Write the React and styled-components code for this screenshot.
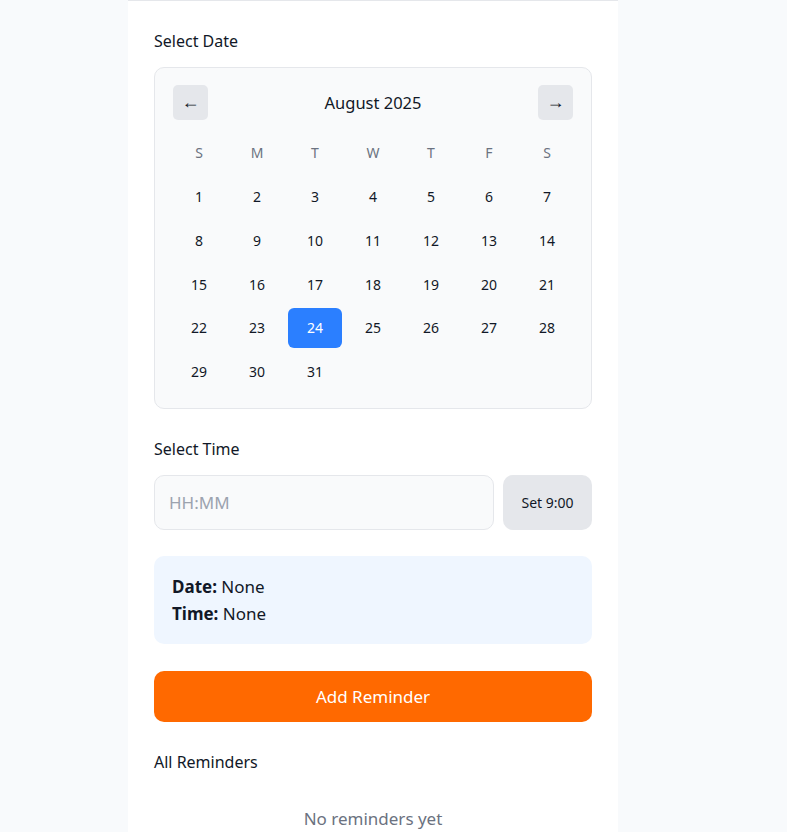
import React from 'react'
import styled, { createGlobalStyle } from 'styled-components'

const GlobalStyle = createGlobalStyle`
  html, body {
    margin: 0;
    padding: 0;
    background: #f8fafc;
    font-family: 'Noto Sans', 'Open Sans', sans-serif;
    color: #111827;
  }
  * { box-sizing: border-box; }
`

const Page = styled.div`
  display: flex;
  justify-content: flex-start;
  padding-left: 128px;
  min-height: 832px;
`

const Column = styled.main`
  width: 490px;
  background: #fff;
  border-top: 1px solid #e5e7eb;
  padding: 28px 26px 0;
  min-height: 832px;
`

const Label = styled.div`
  font-size: 16px;
  line-height: 24px;
  color: #111827;
  margin-bottom: 14px;
`

const Calendar = styled.div`
  background: #f9fafb;
  border: 1px solid #e5e7eb;
  border-radius: 10px;
  padding: 17px 17px 16.5px;
  margin-bottom: 28px;
`

const NavRow = styled.div`
  display: flex;
  align-items: center;
  justify-content: space-between;
  padding: 0 1px;
  margin-bottom: 13px;
`

const NavButton = styled.button`
  width: 35px;
  height: 35px;
  border: none;
  border-radius: 5px;
  background: #e5e7eb;
  color: #111827;
  font-family: 'Liberation Sans', 'DejaVu Sans', sans-serif;
  font-size: 18px;
  padding: 0;
  cursor: pointer;
`

const Month = styled.div`
  font-size: 16.5px;
  color: #111827;
`

const Grid = styled.div`
  display: grid;
  grid-template-columns: repeat(7, 54px);
  column-gap: 4px;
  row-gap: 4.25px;
`

const HeadCell = styled.div`
  height: 39.5px;
  display: flex;
  align-items: center;
  justify-content: center;
  font-size: 14px;
  color: #6b7280;
`

const DayCell = styled.div`
  height: 39.5px;
  display: flex;
  align-items: center;
  justify-content: center;
  font-size: 14px;
  border-radius: 6px;
  color: ${p => (p.$selected ? '#fff' : '#111827')};
  background: ${p => (p.$selected ? '#2b7fff' : 'transparent')};
`

const TimeRow = styled.div`
  display: flex;
  gap: 9px;
  margin-bottom: 26px;
`

const TimeInput = styled.input`
  flex: 1;
  min-width: 0;
  height: 55px;
  border: 1px solid #e5e7eb;
  border-radius: 10px;
  background: #f9fafb;
  padding: 0 14px;
  font-family: inherit;
  font-size: 17px;
  color: #111827;
  outline: none;
  &::placeholder { color: #9ca3af; }
`

const SetButton = styled.button`
  width: 89px;
  height: 55px;
  border: none;
  border-radius: 10px;
  background: #e5e7eb;
  color: #111827;
  font-family: inherit;
  font-size: 14px;
  cursor: pointer;
`

const Summary = styled.div`
  background: #eff6ff;
  border-radius: 10px;
  padding: 17px 18px;
  font-size: 17px;
  line-height: 27px;
  color: #111827;
  margin-bottom: 27px;
  b { font-weight: 700; }
`

const AddButton = styled.button`
  display: block;
  width: 100%;
  height: 51px;
  border: none;
  border-radius: 10px;
  background: #ff6900;
  color: #fff;
  font-family: inherit;
  font-size: 17px;
  cursor: pointer;
  margin-bottom: 28px;
`

const Empty = styled.div`
  text-align: center;
  color: #6b7280;
  font-size: 17px;
  margin-top: 33px;
`

const days = ['S', 'M', 'T', 'W', 'T', 'F', 'S']
const dates = Array.from({ length: 31 }, (_, i) => i + 1)

export default function App() {
  return (
    <Page>
      <GlobalStyle />
      <Column>
        <Label>Select Date</Label>
        <Calendar>
          <NavRow>
            <NavButton>←</NavButton>
            <Month>August 2025</Month>
            <NavButton>→</NavButton>
          </NavRow>
          <Grid>
            {days.map((d, i) => (
              <HeadCell key={i}>{d}</HeadCell>
            ))}
            {dates.map(n => (
              <DayCell key={n} $selected={n === 24}>
                {n}
              </DayCell>
            ))}
          </Grid>
        </Calendar>

        <Label>Select Time</Label>
        <TimeRow>
          <TimeInput placeholder='HH:MM' />
          <SetButton>Set 9:00</SetButton>
        </TimeRow>

        <Summary>
          <div>
            <b>Date:</b> None
          </div>
          <div>
            <b>Time:</b> None
          </div>
        </Summary>

        <AddButton>Add Reminder</AddButton>

        <Label>All Reminders</Label>
        <Empty>No reminders yet</Empty>
      </Column>
    </Page>
  )
}
